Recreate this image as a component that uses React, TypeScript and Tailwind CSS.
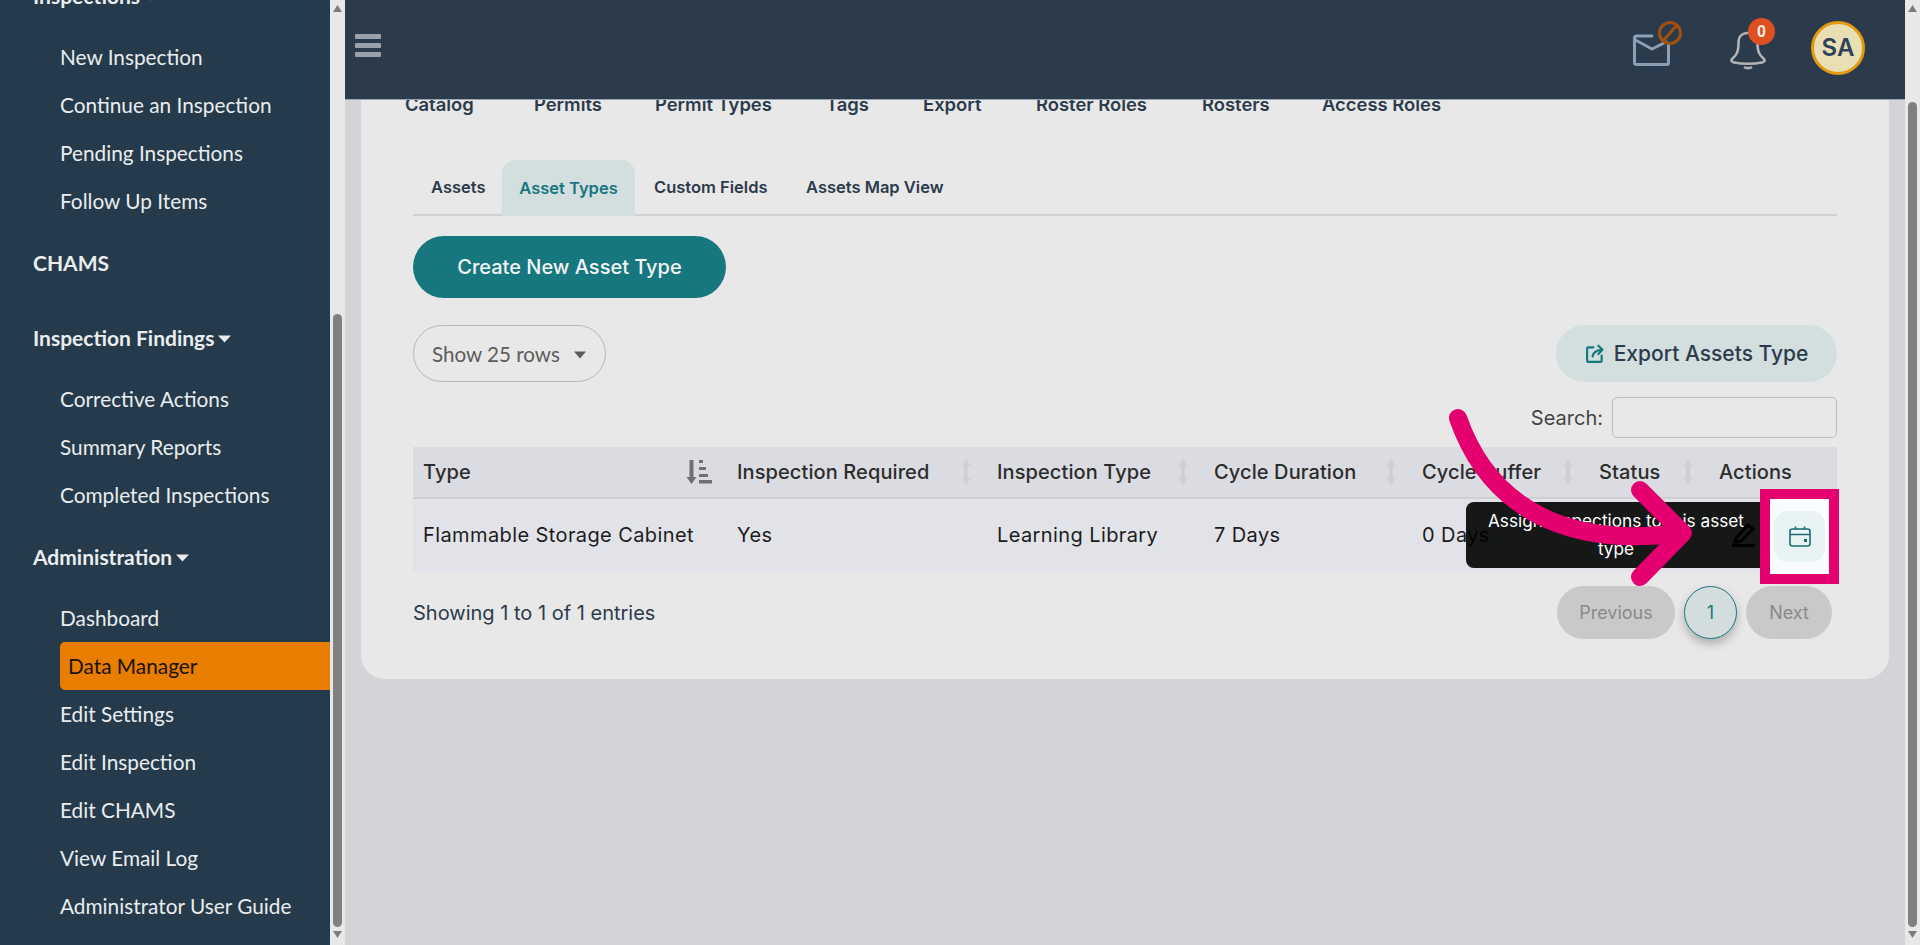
const bodyFont = "font-['Lato','Liberation_Sans',sans-serif]";
const contentFont = "font-['Inter','Liberation_Sans',sans-serif]";

type Section = { title: string; caret?: boolean; items: string[] };

const sections: Section[] = [
  { title: "Inspections", caret: true, items: ["New Inspection", "Continue an Inspection", "Pending Inspections", "Follow Up Items"] },
  { title: "CHAMS", items: [] },
  { title: "Inspection Findings", caret: true, items: ["Corrective Actions", "Summary Reports", "Completed Inspections"] },
  { title: "Administration", caret: true, items: ["Dashboard", "Data Manager", "Edit Settings", "Edit Inspection", "Edit CHAMS", "View Email Log", "Administrator User Guide"] },
];

const topTabs = [
  { label: "Catalog", width: "w-[129px]" },
  { label: "Permits", width: "w-[121px]" },
  { label: "Permit Types", width: "w-[171px]" },
  { label: "Tags", width: "w-[97px]" },
  { label: "Export", width: "w-[113px]" },
  { label: "Roster Roles", width: "w-[166px]" },
  { label: "Rosters", width: "w-[120px]" },
  { label: "Access Roles", width: "w-[150px]" },
];

const columns = [
  { label: "Type", width: "w-[314px]", sort: "active" },
  { label: "Inspection Required", width: "w-[260px]", sort: "idle" },
  { label: "Inspection Type", width: "w-[217px]", sort: "idle" },
  { label: "Cycle Duration", width: "w-[208px]", sort: "idle" },
  { label: "Cycle Buffer", width: "w-[177px]", sort: "idle" },
  { label: "Status", width: "w-[120px]", sort: "idle" },
  { label: "Actions", width: "w-[128px]", sort: "none" },
];

const rowCells = ["Flammable Storage Cabinet", "Yes", "Learning Library", "7 Days", "0 Days", "", ""];

function Caret() {
  return (
    <svg width="13" height="8" viewBox="0 0 13 8" className="ml-1 mt-[2px]">
      <path d="M0 0.5h13L6.5 7.5z" fill="#e8ecef" />
    </svg>
  );
}

function ScrollTrack({ thumb }: { thumb: string }) {
  return (
    <div className="flex h-full w-[15px] shrink-0 flex-col items-center bg-[#e8e8e8]">
      <svg width="9" height="7" viewBox="0 0 9 7" className="mt-[5px]">
        <path d="M4.5 0L9 7H0z" fill="#7d7d7d" />
      </svg>
      <div className={`w-[9px] rounded-[5px] bg-[#808080] ${thumb}`} />
      <svg width="9" height="7" viewBox="0 0 9 7" className="mt-[4px]">
        <path d="M4.5 7L0 0h9z" fill="#7d7d7d" />
      </svg>
    </div>
  );
}

function Sidebar() {
  return (
    <aside className={`${bodyFont} h-full w-[330px] shrink-0 overflow-hidden bg-[#253a4a] text-[20.8px] text-[#e9edf0]`}>
      <div className="mt-[-42px]">
        {sections.map((s) => (
          <div key={s.title} className={s.items.length > 0 ? "mt-[14px]" : "mt-[14px] pb-[13px]"}>
            <div className="flex h-12 items-center pl-[33px] text-[21px] font-bold">
              {s.title}
              {s.caret ? <Caret /> : null}
            </div>
            {s.items.length > 0 ? <div className="mt-[13px]" /> : null}
            {s.items.map((item) =>
              item === "Data Manager" ? (
                <div key={item} className="ml-[60px] flex h-12 items-center rounded-l-[5px] bg-[#e87d00] pl-2 text-[#1a1205]">
                  {item}
                </div>
              ) : (
                <div key={item} className="ml-[60px] flex h-12 items-center">
                  {item}
                </div>
              ),
            )}
          </div>
        ))}
      </div>
    </aside>
  );
}

function Header() {
  return (
    <header className="flex h-[100px] shrink-0 items-start justify-between border-b border-[#9aa3ad] bg-[#2c3b4c]">
      <div className="ml-[10px] mt-[34px] flex w-[26px] flex-col gap-[4px]">
        <div className="h-[5px] rounded-[1px] bg-[#9ca1a9]" />
        <div className="h-[5px] rounded-[1px] bg-[#9ca1a9]" />
        <div className="h-[5px] rounded-[1px] bg-[#9ca1a9]" />
      </div>
      <div className="relative h-full w-[300px]">
        {/* mail with blocked badge */}
        <svg width="52" height="50" viewBox="0 0 52 50" className="absolute left-[27px] top-[20px]" fill="none">
          <path d="M20 16H4.500a2 2 0 0 0-2 2v1.500L20 29l14-7M2.500 19.500V42.500a2 2 0 0 0 2 2h30a2 2 0 0 0 2-2V24" stroke="#8ba0b5" strokeWidth="3" strokeLinejoin="round" strokeLinecap="round" />
          <circle cx="38" cy="13" r="10.500" stroke="#a3500f" strokeWidth="3" />
          <path d="M31 21L45 5" stroke="#a3500f" strokeWidth="3" />
        </svg>
        {/* bell */}
        <svg width="38" height="40" viewBox="0 0 38 40" className="absolute left-[124px] top-[31px]" fill="none" stroke="#b3b3b3" strokeWidth="2.600" strokeLinejoin="round">
          <path d="M19 2c-6 0-9.500 4-9.500 9.500 0 9-1.500 12-6 16-2 2-1 3.500 1.500 4 8 1.500 20 1.500 28 0 2.500-.5 3.500-2 1.500-4-4.500-4-6-7-6-16C28.500 6 25 2 19 2z" />
          <path d="M15 36c2 1.500 6 1.500 8 0" />
        </svg>
        <div className="absolute left-[143px] top-[18px] flex h-[27px] w-[27px] items-center justify-center rounded-full bg-[#df5020] font-['Liberation_Sans',sans-serif] text-[16px] font-bold text-[#f5efe9]">
          0
        </div>
        <div className="absolute left-[206px] top-[21px] flex h-[54px] w-[54px] items-center justify-center rounded-full border-[3px] border-[#e39a10] bg-[#e8dfb5] font-['Inter','Liberation_Sans',sans-serif] text-[24px] font-semibold text-[#2f4259]">
          SA
        </div>
      </div>
    </header>
  );
}

function SortIcon({ kind }: { kind: string }) {
  if (kind === "none") return null;
  if (kind === "active") {
    return (
      <svg width="26" height="26" viewBox="0 0 26 26" fill="#707070" className="mr-[8px]">
        <path d="M3.500 1h4v17h3l-5 7-5-7h3z" />
        <rect x="13" y="1" width="4" height="3" />
        <rect x="13" y="8" width="7" height="3" />
        <rect x="13" y="15" width="9" height="3" />
        <rect x="13" y="21" width="13" height="3.500" />
      </svg>
    );
  }
  return (
    <svg width="10" height="26" viewBox="0 0 10 26" fill="#cfd0d4" className="mr-[9px]">
      <path d="M5 0l5 7H7v12h3l-5 7-5-7h3V7H0z" />
    </svg>
  );
}

function DataTable() {
  return (
    <div className={`${contentFont} mt-[9px]`}>
      <div className="flex h-[52px] border-b-2 border-[#cfd0d4] bg-[#dbdce1] text-[20px] font-medium tracking-[0.1px] text-[#2c2c2c]">
        {columns.map((c) => (
          <div key={c.label} className={`${c.width} flex items-center justify-between pl-[10px] pr-[7px]`}>
            <span className="whitespace-nowrap">{c.label}</span>
            <SortIcon kind={c.sort} />
          </div>
        ))}
      </div>
      <div className="flex h-[72px] bg-[#e2e3e8] text-[20px] tracking-[0.4px] text-[#1c1c1c]">
        {columns.map((c, i) => (
          <div key={c.label} className={`${c.width} flex items-center whitespace-nowrap pl-[10px]`}>
            {rowCells[i]}
          </div>
        ))}
      </div>
    </div>
  );
}

function Card() {
  return (
    <div className={`${contentFont} mx-4 h-[579px] overflow-hidden rounded-b-[24px] bg-[#e8e8e8] pl-[52px] pr-[52px]`}>
      <div className="ml-[-8px] mt-[-9px] flex h-[27px] items-center text-[18.400px] font-semibold text-[#2c3b4c]">
        {topTabs.map((t) => (
          <div key={t.label} className={`${t.width} shrink-0 whitespace-nowrap`}>
            {t.label}
          </div>
        ))}
      </div>
      <div className="mt-[42px] flex h-[56px] items-stretch border-b-2 border-[#d0d1d6] text-[16.500px] font-semibold text-[#2c3b4c]">
        <div className="flex w-[89px] items-center pl-[18px]">Assets</div>
        <div className="mb-[-2px] flex w-[133px] items-center justify-center rounded-t-[14px] bg-[#d3dedf] text-[#17777e]">Asset Types</div>
        <div className="flex w-[171px] items-center pl-[19px]">Custom Fields</div>
        <div className="flex items-center">Assets Map View</div>
      </div>
      <button className="mt-5 flex h-[62px] w-[313px] items-center justify-center rounded-full bg-[#17777e] text-[20px] font-medium text-[#f3f5f5]">
        Create New Asset Type
      </button>
      <div className="mt-[27px] flex h-[57px] items-stretch justify-between">
        <div className={`${bodyFont} flex w-[193px] items-center gap-[14px] rounded-full border border-[#b9b9b9] pl-[18px] pt-[2px] text-[20.600px] text-[#5c5c5c]`}>
          Show 25 rows
          <svg width="12" height="8" viewBox="0 0 12 8">
            <path d="M0 0.5h12L6 7.500z" fill="#5c5c5c" />
          </svg>
        </div>
        <button className="flex w-[281px] items-center justify-center gap-[9px] rounded-full bg-[#d3dedf] text-[21px] font-medium text-[#2c3b4c]">
          <svg width="20" height="20" viewBox="0 0 24 24" fill="none" stroke="#17777e" strokeWidth="2.600" strokeLinecap="round" strokeLinejoin="round">
            <path d="M10 4H4a1.500 1.500 0 0 0-1.500 1.500V20A1.500 1.500 0 0 0 4 21.500h14.500A1.500 1.500 0 0 0 20 20v-6" />
            <path d="M9 15c1-5 5-8 12-8M16 2l5 5-5 5" />
          </svg>
          Export Assets Type
        </button>
      </div>
      <div className="mt-[15px] flex h-[41px] items-center justify-end gap-[9px] text-[20px] text-[#444]">
        Search:
        <div className="h-full w-[225px] rounded-[5px] border border-[#b9bcc4]" />
      </div>
      <DataTable />
      <div className="mt-[15px] flex h-[53px] items-center justify-between pr-[5px]">
        <span className="text-[20px] text-[#2c3b4c]">Showing 1 to 1 of 1 entries</span>
        <div className="flex items-center gap-[9px] text-[18px] text-[#8a8a8a]">
          <div className="flex h-[53px] w-[118px] items-center justify-center rounded-full bg-[#c9c9c9]">Previous</div>
          <div className="flex h-[53px] w-[53px] items-center justify-center rounded-full border border-[#17777e] bg-[#d3dddd] text-[#17777e] shadow-[0_5px_10px_rgba(0,0,0,0.25)]">1</div>
          <div className="flex h-[53px] w-[86px] items-center justify-center rounded-full bg-[#c9c9c9]">Next</div>
        </div>
      </div>
    </div>
  );
}

// callout drawn on top of the table: tooltip, pencil, arrow and highlight box
function Overlay() {
  return (
    <>
      <svg width="26" height="26" viewBox="0 0 26 26" className="absolute left-[1731px] top-[521px]" fill="none" stroke="#000" strokeWidth="3">
        <path d="M5 17L17 4l5 4-12 12-6 1z" />
        <path d="M1 24.500h23" />
      </svg>
      <div className={`${contentFont} absolute left-[1466px] top-[502px] flex h-[66px] w-[304px] items-center justify-center rounded-l-[8px] bg-black/90 pl-4 pr-5 text-center text-[17.200px] leading-[28px] text-white`}>
        Assign Inspections to this asset
        <br />
        type
      </div>
      <div className="absolute left-[1760px] top-[489px] flex h-[95px] w-[79px] items-center justify-center border-[10px] border-[#e5006f] bg-[#fafbff]">
        <div className="flex h-[51px] w-[51px] items-center justify-center rounded-[14px] bg-[#e8f3f3]">
          <svg width="24" height="24" viewBox="0 0 24 24" fill="none" stroke="#1d6a72" strokeWidth="1.600" strokeLinejoin="round">
            <rect x="2" y="4" width="20" height="17" rx="2.500" />
            <path d="M2 9.500h20M7.500 1.500v3M16.500 1.500v3" />
            <rect x="16" y="14" width="3" height="3" fill="#1d6a72" stroke="none" />
          </svg>
        </div>
      </div>
      <svg width="1920" height="945" viewBox="0 0 1920 945" className="pointer-events-none absolute left-0 top-0" fill="none" stroke="#e5006f" strokeWidth="18" strokeLinecap="round" strokeLinejoin="round">
        <path d="M1458 418C1490 510 1570 548 1680 533" />
        <path d="M1640 490L1683 533L1640 577" />
      </svg>
    </>
  );
}

export default function App() {
  return (
    <div className="relative flex h-screen w-full overflow-hidden bg-[#d3d4d8]">
      <Sidebar />
      <ScrollTrack thumb="mt-[302px] h-[613px]" />
      <main className="flex h-full min-w-0 flex-1 flex-col">
        <Header />
        <Card />
      </main>
      <ScrollTrack thumb="mt-[90px] h-[825px]" />
      <Overlay />
    </div>
  );
}
